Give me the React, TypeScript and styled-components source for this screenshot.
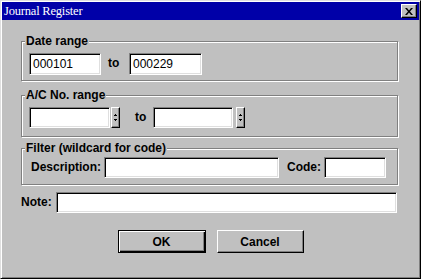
import React from "react";
import styled, { createGlobalStyle } from "styled-components";

const GlobalStyle = createGlobalStyle`
  html, body {
    margin: 0;
    padding: 0;
    background: #c0c0c0;
  }
  * {
    box-sizing: border-box;
  }
`;

const Window = styled.div`
  width: 421px;
  height: 279px;
  padding: 1px;
  background: #c0c0c0;
  border: 1px solid;
  border-color: #dfdfdf #000 #000 #dfdfdf;
  box-shadow: inset 1px 1px 0 #fff, inset -1px -1px 0 #808080;
  font-family: "Liberation Sans", Arial, sans-serif;
  font-size: 12px;
  color: #000;
  display: flex;
  flex-direction: column;
`;

const TitleBar = styled.div`
  height: 18px;
  background: #0000a8;
  display: flex;
  align-items: center;
  justify-content: space-between;
  padding: 0 2px 0 2px;
`;

const Title = styled.span`
  font-family: "Liberation Serif", "Times New Roman", serif;
  font-size: 12.5px;
  color: #fff;
  letter-spacing: -0.2px;
`;

const CloseButton = styled.div`
  width: 16px;
  height: 14px;
  background: #c0c0c0;
  border: 1px solid;
  border-color: #fff #000 #000 #fff;
  box-shadow: inset -1px -1px 0 #808080;
  display: flex;
  align-items: center;
  justify-content: center;
`;

const Content = styled.div`
  flex: 1;
  padding: 21px 21px 0 19px;
  display: flex;
  flex-direction: column;
`;

const Group = styled.div<{ $h: number; $pt: number; $mb: number }>`
  position: relative;
  height: ${(p) => p.$h}px;
  padding: ${(p) => p.$pt}px 0 0 7px;
  margin-bottom: ${(p) => p.$mb}px;
  border: 1px solid #808080;
  box-shadow: 1px 1px 0 #fff, inset 1px 1px 0 #fff;
  display: flex;
  align-items: flex-start;
`;

const Legend = styled.span`
  position: absolute;
  top: -8px;
  left: 3px;
  padding: 0 1px;
  line-height: 14px;
  background: #c0c0c0;
  font-weight: bold;
`;

const Label = styled.span<{ $ml: number; $w?: number }>`
  margin-left: ${(p) => p.$ml}px;
  width: ${(p) => (p.$w ? `${p.$w}px` : "auto")};
  font-weight: bold;
  line-height: 21px;
  white-space: nowrap;
`;

const Field = styled.div<{ $w: number; $h?: number }>`
  width: ${(p) => p.$w}px;
  height: ${(p) => p.$h ?? 21}px;
  background: #fff;
  border: 1px solid;
  border-color: #808080 #fff #fff #808080;
  box-shadow: inset 1px 1px 0 #000, inset -1px -1px 0 #dfdfdf;
  padding: 0 3px;
  display: flex;
  align-items: center;
  font-size: 12px;
`;

const Combo = styled.div<{ $gap: number }>`
  display: flex;
  gap: ${(p) => p.$gap}px;
`;

const Spin = styled.div`
  width: 9px;
  height: 21px;
  background: #c0c0c0;
  border: 1px solid;
  border-color: #fff #000 #000 #fff;
  box-shadow: inset -1px -1px 0 #808080;
  display: flex;
  align-items: center;
  justify-content: center;
`;

const NoteRow = styled.div`
  display: flex;
  align-items: center;
  margin-top: 7px;
`;

const Buttons = styled.div`
  display: flex;
  justify-content: center;
  gap: 11px;
  margin-top: 17px;
  padding-left: 2px;
`;

const Button = styled.div<{ $default?: boolean }>`
  width: ${(p) => (p.$default ? 88 : 87)}px;
  height: 23px;
  background: #c0c0c0;
  font-weight: bold;
  display: flex;
  align-items: center;
  justify-content: center;
  border: 1px solid;
  border-color: ${(p) => (p.$default ? "#000" : "#fff #000 #000 #fff")};
  box-shadow: ${(p) =>
    p.$default
      ? "inset 1px 1px 0 #fff, inset -1px -1px 0 #000, inset -2px -2px 0 #808080"
      : "inset -1px -1px 0 #808080"};
`;

const CloseIcon = () => (
  <svg width="8" height="7" viewBox="0 0 8 7">
    <path d="M0 0h2l2 2.5L6 0h2L5 3.5 8 7H6L4 4.5 2 7H0l3-3.5z" fill="#000" />
  </svg>
);

const SpinIcon = () => (
  <svg width="3" height="13" viewBox="0 0 3 13">
    <path d="M1 3h1v1H1zM0 4h3v1H0zM0 8h3v1H0zM1 9h1v1H1z" fill="#000" />
  </svg>
);

export default function App() {
  return (
    <>
      <GlobalStyle />
      <Window>
        <TitleBar>
          <Title>Journal Register</Title>
          <CloseButton>
            <CloseIcon />
          </CloseButton>
        </TitleBar>
        <Content>
          <Group $h={40} $pt={11} $mb={14}>
            <Legend>Date range</Legend>
            <Field $w={72} $h={22}>000101</Field>
            <Label $ml={7} $w={21}>to</Label>
            <Field $w={73} $h={22}>000229</Field>
          </Group>
          <Group $h={42} $pt={11} $mb={11}>
            <Legend>A/C No. range</Legend>
            <Combo $gap={1}>
              <Field $w={81} />
              <Spin>
                <SpinIcon />
              </Spin>
            </Combo>
            <Label $ml={15} $w={18}>to</Label>
            <Combo $gap={3}>
              <Field $w={80} />
              <Spin>
                <SpinIcon />
              </Spin>
            </Combo>
          </Group>
          <Group $h={37} $pt={8} $mb={0}>
            <Legend>Filter (wildcard for code)</Legend>
            <Label $ml={2} $w={73}>Description:</Label>
            <Field $w={175} />
            <Label $ml={8} $w={37}>Code:</Label>
            <Field $w={62} />
          </Group>
          <NoteRow>
            <Label $ml={0} $w={35}>Note:</Label>
            <Field $w={341} />
          </NoteRow>
          <Buttons>
            <Button $default>OK</Button>
            <Button>Cancel</Button>
          </Buttons>
        </Content>
      </Window>
    </>
  );
}
